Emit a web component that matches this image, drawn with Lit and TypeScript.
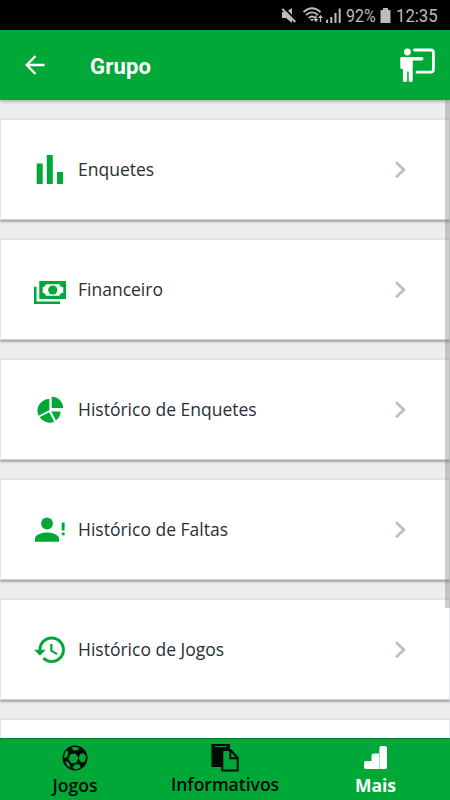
import { LitElement, html, css, svg } from "lit";
import { customElement } from "lit/decorators.js";

const icons = {
  bars: svg`<path d="M4.700 11.500h6V32h-6zM14.800 3h6v29h-6zM25 20h6v12h-6z"/>`,
  money: svg`<path fill-rule="evenodd" d="M7.3 9H34v18H7.3zM14 12.3q-.5 2.700-3.300 3v5.400q2.800.3 3.300 3h13.500q.5-2.700 3.800-3v-5.400q-3.300-.3-3.800-3z"/><circle cx="20.800" cy="18" r="4.600"/><path d="M2 14.700h2.500v14.800H28V32H2z"/>`,
  pie: svg`<path d="M19.700 16V4.700A11.500 11.500 0 0 1 31.200 16zM17.400 7v11.300L6.500 23.700A11.800 11.800 0 0 1 17.400 7zM17.200 20.300l5 9.400A12 12 0 0 1 7.600 25.200zM19.200 19.400h9.400a11.500 11.500 0 0 1-4.700 8.900z"/>`,
  person: svg`<circle cx="15" cy="11.500" r="5.900"/><path d="M3 29.700v-3.200C3 22.400 11 20.600 15 20.600s12 1.800 12 5.900v3.200zM29.700 10.400h2.900v8h-2.900zM29.700 20.600h2.900v2.700h-2.900z"/>`,
  history: svg`<path transform="translate(.6 .2) scale(1.470)" d="M13 3c-4.970 0-9 4.030-9 9H1l3.890 3.890.07.14L9 12H6c0-3.870 3.130-7 7-7s7 3.130 7 7-3.130 7-7 7c-1.930 0-3.680-.79-4.940-2.060l-1.420 1.420C8.270 19.990 10.510 21 13 21c4.970 0 9-4.030 9-9s-4.030-9-9-9zm-1 5v5l4.280 2.540.72-1.210-3.500-2.080V8H12z"/>`,
};

const rows = [
  { icon: icons.bars, label: "Enquetes" },
  { icon: icons.money, label: "Financeiro" },
  { icon: icons.pie, label: "Histórico de Enquetes" },
  { icon: icons.person, label: "Histórico de Faltas" },
  { icon: icons.history, label: "Histórico de Jogos" },
];

@customElement("app-root")
export class AppRoot extends LitElement {
  static styles = css`
    :host {
      display: flex;
      flex-direction: column;
      position: relative;
      width: 450px;
      height: 800px;
      overflow: hidden;
      background: #eee;
      font-family: "Open Sans", "Noto Sans", sans-serif;
    }
    * { box-sizing: border-box; }
    svg { display: block; flex: none; }
    .status {
      flex: none;
      height: 30px;
      background: #000;
      color: #bdbdbd;
      display: flex;
      align-items: center;
      padding-left: 280px;
      font: 19px/32px Roboto, sans-serif;
    }
    .pct, .clock {
      display: block;
      flex: none;
      transform-origin: 0 50%;
      white-space: nowrap;
      padding-top: 2px;
    }
    .pct { width: 34px; margin-left: 2px; transform: scaleX(.84); }
    .clock { width: 44px; margin-left: 5px; transform: scaleX(.88); }
    .header {
      flex: none;
      height: 70px;
      background: #00a838;
      color: #fff;
      display: flex;
      align-items: center;
      padding: 0 15px 0 25px;
      box-shadow: 0 1px 4px rgba(0, 0, 0, .35);
      z-index: 1;
    }
    .title {
      margin: 3px auto 0 45px;
      font: 700 22px/30px Roboto, sans-serif;
      letter-spacing: .2px;
    }
    .list {
      flex: 1;
      min-height: 0;
      overflow: hidden;
      display: flex;
      flex-direction: column;
      gap: 18px;
      padding-top: 18px;
    }
    .card {
      flex: none;
      height: 102px;
      background: #fff;
      border: 1px solid #dee6ec;
      border-top-width: 2px;
      border-bottom-color: #cfd2d4;
      box-shadow: 0 2px 2px rgba(0, 0, 0, .3);
      display: flex;
      align-items: center;
      padding: 0 42px 0 31px;
      color: #2a2e36;
    }
    .green { fill: #00a838; }
    .label { margin: 0 auto 2px 10px; font-size: 17.500px; line-height: 24px; }
    .nav {
      flex: none;
      height: 62px;
      background: #00a838;
      border-top: 1px solid #087b20;
      display: grid;
      grid-template-columns: repeat(3, 1fr);
      z-index: 1;
    }
    .tab {
      display: flex;
      flex-direction: column;
      align-items: center;
      padding-top: 4px;
      font-size: 17.500px;
      font-weight: 600;
      line-height: 25px;
      color: #020a04;
    }
    .tab.mid { line-height: 22px; }
    .tab.on { color: #fff; font-weight: 700; }
    .tab.on span { padding-left: 1px; }
    .scroll {
      position: absolute;
      right: 0;
      top: 100px;
      width: 5px;
      height: 508px;
      background: rgba(120, 120, 120, .36);
      z-index: 2;
    }
  `;

  render() {
    return html`
      <div class="status">
        <svg width="64" height="30" viewBox="280 0 64 30" fill="#bdbdbd">
          <path d="M282 12h4l6-4v15l-6-5h-4z"/>
          <path d="M283.500 7.500l14 14" stroke="#000" stroke-width="1.800"/>
          <path d="M282.300 8.800l13 13.200" stroke="#bdbdbd" stroke-width="1.900"/>
          <g fill="none" stroke="#bdbdbd" stroke-width="1.800">
            <path d="M303.500 12q8.500-7.500 17 0M306 15q6-5.200 12 0M308.700 18q3.300-3 6.600 0"/>
            <path d="M316 15.500v5M320.500 22v-5" stroke-width="1.300"/>
          </g>
          <path d="M310 19h4l-2 2.500zM313.500 19h5l-2.500 3.200zM318 18l2.500-3 2.500 3z"/>
          <path d="M326 20.500l2-1.500v4h-2zM330.300 17h2v6h-2zM334.500 13h2v10h-2zM338.700 8.500h2V23h-2z"/>
        </svg>
        <span class="pct">92%</span>
        <svg width="11" height="30" viewBox="0 0 11 30" fill="#bdbdbd"><path d="M3 8h5v2h2.500v13H.5V10H3z"/></svg>
        <span class="clock">12:35</span>
      </div>
      <div class="header">
        <svg width="20" height="20" viewBox="0 0 20 20" fill="none" stroke="#fff" stroke-width="2.300"><path d="M10.500 1L1.700 10l8.800 9M1.500 10h18"/></svg>
        <span class="title">Grupo</span>
        <svg width="35" height="34" viewBox="400 48 35 34" fill="#fff">
          <circle cx="407.400" cy="52" r="3.400"/>
          <path d="M401.500 57h20.200a1.600 1.600 0 0 1 0 3.600h-9V80.500a1.400 1.400 0 0 1-1.400 1.400h-1.300a1.400 1.400 0 0 1-1.300-1.400V71.500h-1.500v9a1.400 1.400 0 0 1-1.300 1.400h-1.600a1.400 1.400 0 0 1-1.400-1.400V69h-1.100q-1.500 0-1.500-1.500V58.500q0-1.500 1.200-1.500z"/>
          <path d="M414.500 50h16.300q2.600 0 2.600 2.600v17q0 2.600-2.600 2.600H417" fill="none" stroke="#fff" stroke-width="2.800" stroke-linecap="round"/>
        </svg>
      </div>
      <div class="list">
        ${rows.map((r) => html`<div class="card">
          <svg class="green" width="36" height="36" viewBox="0 0 36 36">${r.icon}</svg>
          <span class="label">${r.label}</span>
          <svg width="13" height="18" viewBox="0 0 13 18" fill="none" stroke="#b5bfc5" stroke-width="2.700"><path d="M2 1.300L9.900 8.700 2 16.200"/></svg>
        </div>`)}
        <div class="card"></div>
      </div>
      <div class="nav">
        <div class="tab">
          <svg width="30" height="30" viewBox="60 743 30 30">
            <circle cx="75" cy="758" r="12.500" fill="#020a04"/>
            <path fill="#00a838" d="M70.500 754.200l5-.7 3 4.200-2.200 5-5 .6-3-4.300zM71.300 747.400q4-1.200 8 .5l-1.500 2.400-4.200.3zM80 754.100l3.600-.8 2.600 3.200-1.400 5.200-3.800.8-2.200-4.100zM75.300 764.300l4.100.3 1.300 2.700q-2.700 2.100-5.800 2.300l-2.400-2.400zM67 749.900l1.600 3-1.600 4-2.900 1.200q-.6-4.600 2.900-8.200zM66.600 761.300l2.700 2 1.400 4.500q-3.900-1.600-5.400-5.300z"/>
          </svg>
          <span>Jogos</span>
        </div>
        <div class="tab mid">
          <svg width="30" height="30" viewBox="210 743 30 30">
            <path fill="#020a04" d="M211.500 744h18.500v5h-8v18h-10.500z"/>
            <path d="M215 746.500h11.500" stroke="#00a838" stroke-width="1"/>
            <path fill="#00a838" stroke="#020a04" stroke-width="2" d="M222.300 750h8.200l7.200 8v12.500h-15.400zM230.300 750v8.300h7.400"/>
          </svg>
          <span>Informativos</span>
        </div>
        <div class="tab on">
          <svg width="30" height="30" viewBox="360 743 30 30" fill="#fff">
            <path d="M366 761h5v8h-5q-2 0-2-2v-4q0-2 2-2zM373.500 753.500h5.500V769h-7.500v-13.500q0-2 2-2zM381.500 746h3.500q2 0 2 2v19q0 2-2 2h-5.600v-21q0-2 2.100-2zM370 761h2v8h-2z"/>
          </svg>
          <span>Mais</span>
        </div>
      </div>
      <div class="scroll"></div>
    `;
  }
}
